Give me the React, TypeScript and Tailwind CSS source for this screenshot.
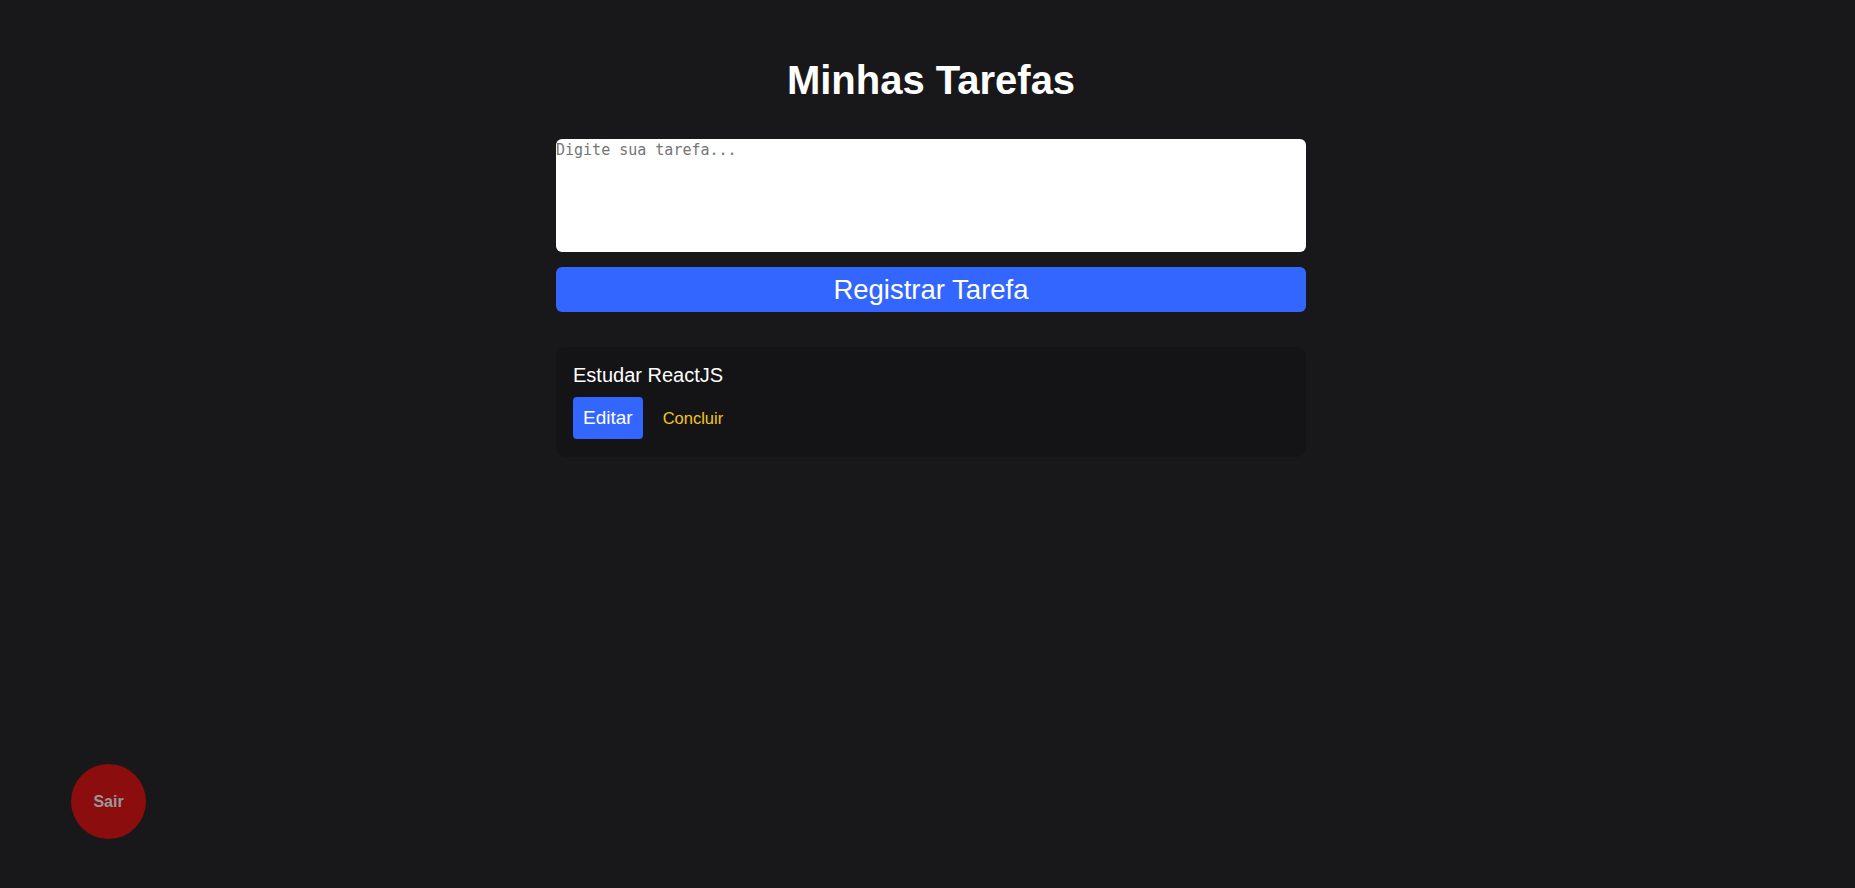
import React from "react";

export default function App() {
  return (
    <div className="min-h-screen w-full bg-[#18181b] font-['Liberation_Sans',Arial,sans-serif] text-white">
      <div className="flex justify-center pl-[7px]">
        <div className="flex w-[750px] flex-col">
          <h1 className="mt-[58px] text-center text-[40px] font-bold leading-[45px] text-white">
            Minhas Tarefas
          </h1>
          <div className="mt-[36px] h-[113px] w-full overflow-hidden rounded-[6px] bg-white">
            <textarea
              className="block h-full w-full resize-none appearance-none overflow-hidden border-0 bg-transparent p-0 font-['DejaVu_Sans_Mono',monospace] text-[15px] text-black shadow-none outline-none [scrollbar-width:none] placeholder:text-[#757575]"
              placeholder="Digite sua tarefa..."
            />
          </div>
          <button className="mt-[15px] h-[45px] w-full rounded-[6px] bg-[#3366ff] text-[27.5px] leading-[45px] text-white">
            Registrar Tarefa
          </button>
          <div className="mt-[35px] flex h-[110px] flex-col rounded-[10px] bg-[#141416] pl-[17px] pt-[17px]">
            <p className="text-[20px] leading-[23px] text-white">Estudar ReactJS</p>
            <div className="mt-[10px] flex items-center">
              <button className="h-[42px] rounded-[4px] bg-[#3366ff] px-[10px] text-[19px] leading-[22px] text-white">
                Editar
              </button>
              <button className="ml-[20px] text-[16.5px] leading-[20px] text-[#f5c518]">
                Concluir
              </button>
            </div>
          </div>
        </div>
      </div>
      <button className="fixed bottom-[49px] left-[71px] flex h-[75px] w-[75px] items-center justify-center rounded-full bg-[#8b0d0e] text-[16px] font-bold text-[#999999]">
        Sair
      </button>
    </div>
  );
}
